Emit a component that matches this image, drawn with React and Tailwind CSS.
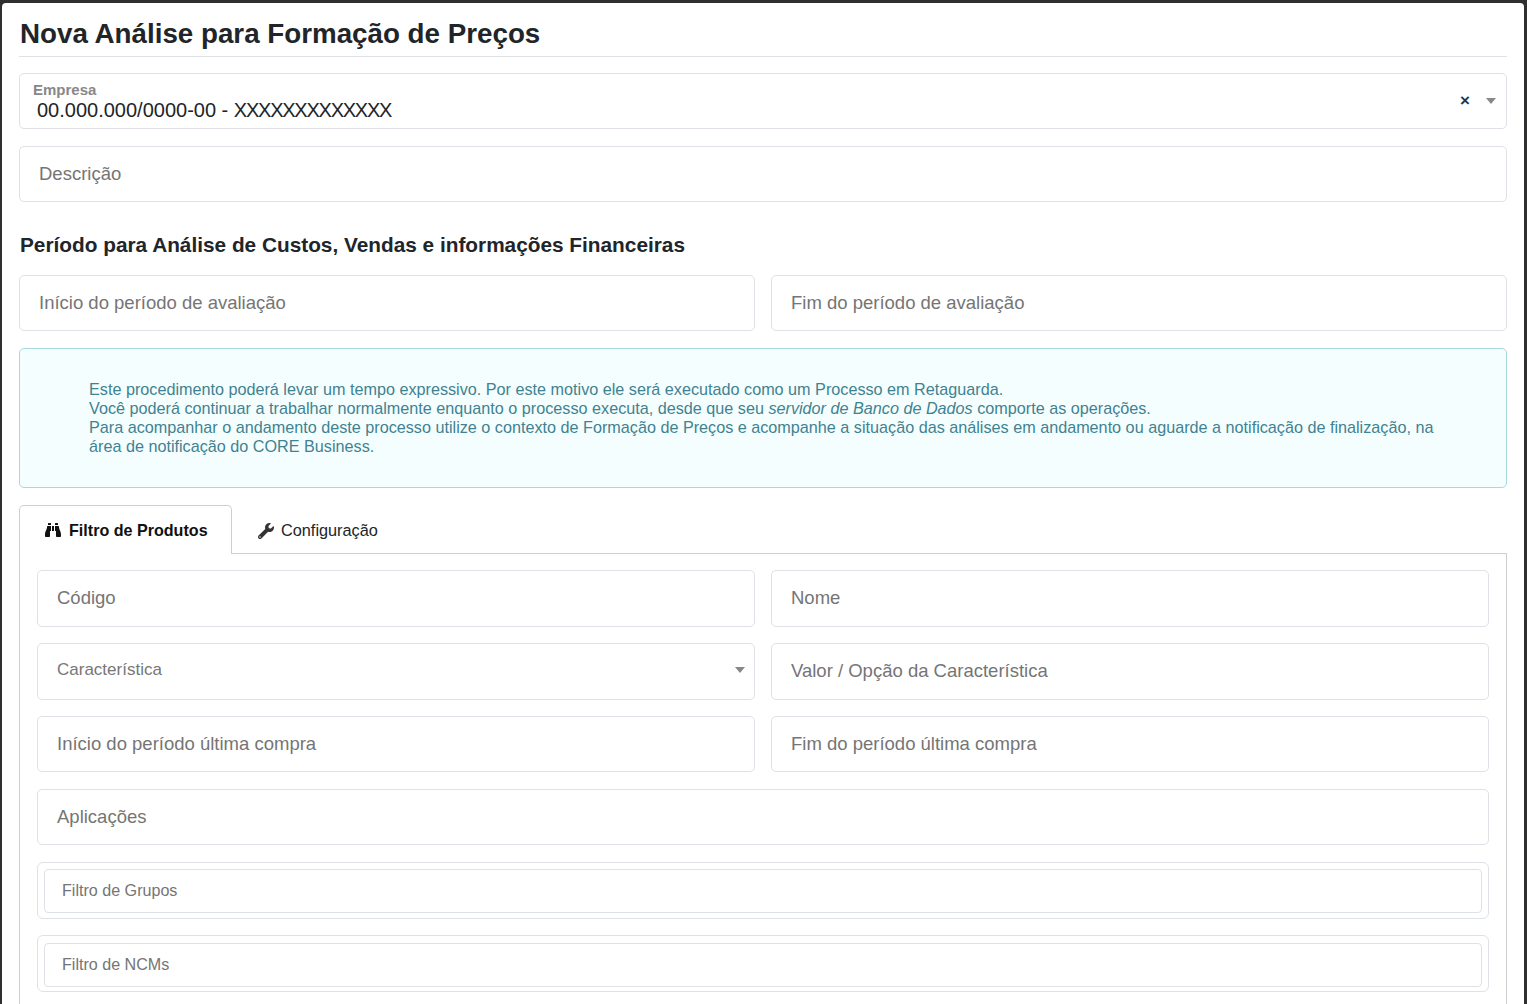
import { FaBinoculars, FaWrench } from "react-icons/fa";

function Field({ label, className = "" }) {
  return (
    <div className={`flex h-[56px] items-center rounded-[5px] border border-[#dee2e6] bg-white pl-[19px] text-[18.5px] text-[#757575] ${className}`}>
      {label}
    </div>
  );
}

function Caret() {
  return <span className="h-0 w-0 border-x-[5px] border-t-[6px] border-x-transparent border-t-[#888]" />;
}

function FilterBox({ label, className = "" }) {
  return (
    <div className={`rounded-[6px] border border-[#dee2e6] px-[6px] ${className}`}>
      <div className="flex h-[44px] items-center rounded-[4px] border border-[#dee2e6] pb-[2px] pl-[17px] text-[16.1px] text-[#757575]">
        {label}
      </div>
    </div>
  );
}

export default function App() {
  return (
    <div className="h-[1004px] overflow-hidden bg-[#2f2f2f] pl-[2px] pr-[3px] pt-[3px] font-['Liberation_Sans',Arial,sans-serif]">
      <div className="h-[1001px] rounded-t-[4px] bg-white px-[17px]">
        <h1 className="flex h-[54px] items-center border-b border-[#dee2e6] pl-[1px] pt-[8px] text-[27.75px] font-bold leading-none text-[#212529]">
          Nova Análise para Formação de Preços
        </h1>

        <div className="mt-[16px] flex h-[56px] items-start justify-between rounded-[5px] border border-[#dee2e6] pl-[13px] pr-[10px]">
          <div>
            <div className="mt-[8px] text-[15px] font-bold leading-[16px] text-[#888888]">Empresa</div>
            <div className="pl-[4px] pt-[1px] text-[20px] leading-[23px] text-[#212529]">
              00.000.000/0000-00 - <span className="tracking-[-1.24px]">XXXXXXXXXXXXX</span>
            </div>
          </div>
          <div className="mt-[18px] flex items-center gap-[16px]">
            <span className="text-[17px] font-bold leading-none text-[#333]">×</span>
            <Caret />
          </div>
        </div>

        <Field label="Descrição" className="mt-[17px]" />

        <h2 className="mt-[30px] h-[27px] pl-[1px] text-[20.8px] font-bold leading-[26px] text-[#212529]">
          Período para Análise de Custos, Vendas e informações Financeiras
        </h2>

        <div className="mt-[16px] grid grid-cols-2 gap-[16px]">
          <Field label="Início do período de avaliação" />
          <Field label="Fim do período de avaliação" />
        </div>

        <div className="mt-[17px] h-[140px] rounded-[5px] border border-[#a8d8e0] bg-[#f5feff] pl-[69px] pr-[60px] pt-[31px] text-[16.2px] leading-[19px] text-[#3f8291]">
          Este procedimento poderá levar um tempo expressivo. Por este motivo ele será executado como um Processo em Retaguarda.
          <br />
          Você poderá continuar a trabalhar normalmente enquanto o processo executa, desde que seu <em>servidor de Banco de Dados</em> comporte as operações.
          <br />
          Para acompanhar o andamento deste processo utilize o contexto de Formação de Preços e acompanhe a situação das análises em andamento ou aguarde a notificação de finalização, na área de notificação do CORE Business.
        </div>

        <div className="mt-[17px] flex h-[49px] border-b border-[#cfcfcf]">
          <div className="-mb-px flex h-[49px] w-[213px] items-center gap-[8px] rounded-t-[5px] border border-b-0 border-[#cfcfcf] bg-white pl-[25px] text-[16.1px] font-bold text-[#111]">
            <FaBinoculars className="h-[16px] w-[16px]" />
            Filtro de Produtos
          </div>
          <div className="flex items-center gap-[7px] pl-[26px] pt-[3px] text-[16.3px] text-[#212529]">
            <FaWrench className="h-[16px] w-[16px] text-[#333]" />
            Configuração
          </div>
        </div>

        <div className="h-[451px] border-x border-[#cfcfcf] px-[17px] pt-[16px]">
          <div className="grid grid-cols-2 gap-[16px]">
            <Field label="Código" className="h-[57px] pb-[2px]" />
            <Field label="Nome" className="h-[57px] pb-[2px]" />
            <div className="flex h-[57px] items-center justify-between rounded-[5px] border border-[#dee2e6] pb-[3px] pl-[19px] pr-[9px] text-[17px] text-[#777]">
              Característica
              <Caret />
            </div>
            <Field label="Valor / Opção da Característica" className="h-[57px] pb-[2px]" />
            <Field label="Início do período última compra" />
            <Field label="Fim do período última compra" />
          </div>
          <Field label="Aplicações" className="mt-[17px]" />
          <FilterBox label="Filtro de Grupos" className="mt-[17px] h-[57px] pt-[6px]" />
          <FilterBox label="Filtro de NCMs" className="mt-[16px] h-[57px] pt-[7px]" />
        </div>
      </div>
    </div>
  );
}
